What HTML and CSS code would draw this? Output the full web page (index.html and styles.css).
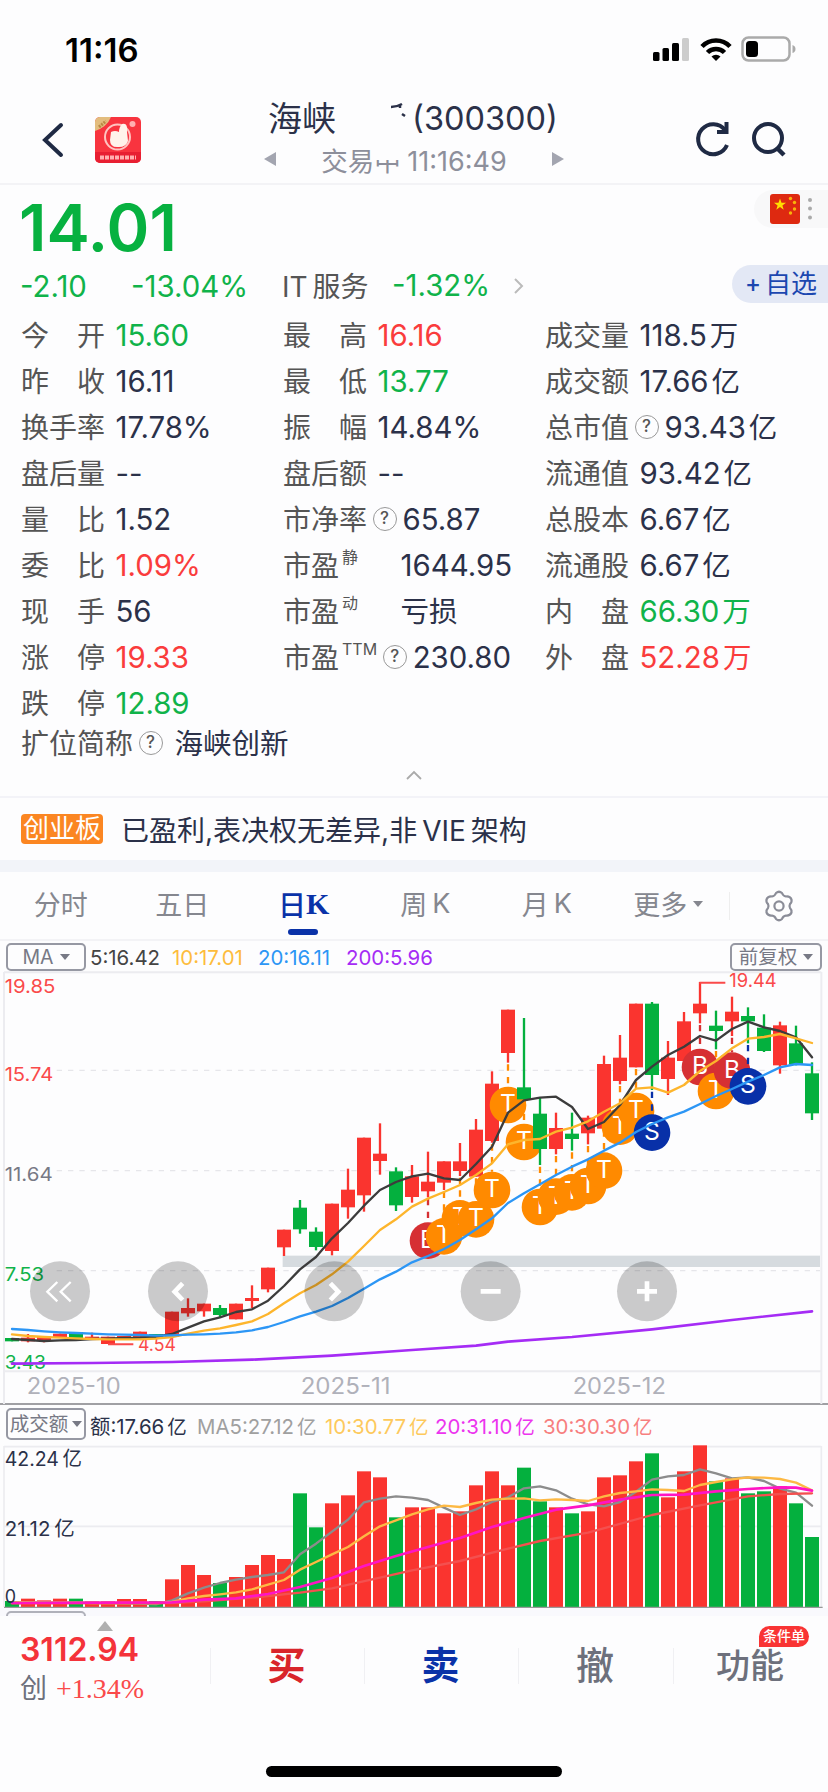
FILE: index.html
```html
<!DOCTYPE html>
<html lang="zh-CN">
<head>
    <meta charset="UTF-8">
    <meta name="viewport" content="width=device-width, initial-scale=1.0">
    <title>海峡创新 300300</title>
    <link rel="stylesheet" href="styles.css">
</head>
<body>
    <!-- 状态栏 -->
    <div class="status-bar">
        <span class="clock">11:16</span>
        <svg class="status-icons" width="142" height="30" viewBox="0 0 142 30">
            <rect x="0" y="18" width="6.5" height="9" rx="1.5"/>
            <rect x="9.5" y="14" width="6.5" height="13" rx="1.5"/>
            <rect x="19" y="9" width="7" height="18" rx="1.5"/>
            <rect x="29" y="4" width="7" height="23" rx="1.5" fill="#ccc"/>
            <g fill="none" stroke="#000" stroke-width="4.6">
                <path d="M49 12.5a19.5 19.5 0 0 1 28 0"/>
                <path d="M54.5 18.5a12 12 0 0 1 17 0"/>
            </g>
            <path d="M58.500 22.500a6.500 6.500 0 0 1 9 0l-4.500 4.500z"/>
            <rect x="89.500" y="3.500" width="47" height="23" rx="6" fill="none" stroke="#aaa" stroke-width="2.500"/>
            <rect x="93" y="7" width="12" height="16" rx="3.500"/>
            <path d="M139.500 11q3 1 3 4t-3 4z" fill="#aaa"/>
        </svg>
    </div>

    <!-- 标题栏 -->
    <header class="header">
        <div class="header-left">
            <svg width="22" height="34" viewBox="0 0 22 34"><path d="M19 2L3 17l16 15" fill="none" stroke="#1f2a44" stroke-width="4" stroke-linecap="round"/></svg>
            <svg class="app-logo" width="46" height="46" viewBox="0 0 46 46">
                <rect width="46" height="46" rx="5" fill="#f8343f"/>
                <path d="M0 14V5a5 5 0 0 1 5-5h11q-4 10-16 14z" fill="#e3bd7e"/>
                <path d="M4 10l7-6" stroke="#b98a45" stroke-width="3" stroke-dasharray="2 1"/>
                <circle cx="22.500" cy="20" r="12.500" fill="none" stroke="#ffc4c0" stroke-width="2"/>
                <path d="M16 15q4-2 8 0 0-5 3-8 6-2 5 8l1 9q-2 6-9 6-9 1-9-7z" fill="#fff3ea"/>
                <circle cx="37.500" cy="7" r="3" fill="#ffb0b0"/>
                <path d="M0 35h46v6a5 5 0 0 1-5 5H5a5 5 0 0 1-5-5z" fill="#e81f32"/>
                <path d="M5 40.500h36" stroke="#ffb0b0" stroke-width="4" stroke-dasharray="4 1"/>
            </svg>
        </div>
        <div class="header-title">
            <div class="stock-name">
                <span>海峡</span>
                <svg width="76" height="34" viewBox="0 0 76 34"><path d="M55 6q6 0 11-3M64 4v3M66 13l3 2" fill="none" stroke="#2b3149" stroke-width="2.500"/></svg>
                <span class="stock-code">(300300)</span>
            </div>
            <div class="trade-state">
                <i class="arrow-left"></i>
                <span class="state-text">交易<span class="worn">中</span> <span class="state-time">11:16:49</span></span>
                <i class="arrow-right"></i>
            </div>
        </div>
        <div class="header-right">
            <svg width="36" height="38" viewBox="0 0 36 38"><path d="M31 10A15 15 0 1 0 33 25" fill="none" stroke="#1f2a44" stroke-width="4"/><path d="M23 12h9.500V2" fill="none" stroke="#1f2a44" stroke-width="4"/></svg>
            <svg width="36" height="38" viewBox="0 0 36 38"><circle cx="17" cy="18" r="14" fill="none" stroke="#1f2a44" stroke-width="4"/><path d="M26 28l7 7" stroke="#1f2a44" stroke-width="4.500"/></svg>
        </div>
    </header>

    <!-- 行情 -->
    <section class="quote">
        <div class="quote-top">
            <span class="price">14.01</span>
            <div class="market-tag">
                <svg width="30" height="30" viewBox="0 0 30 30">
                    <rect width="30" height="30" rx="3" fill="#de2910"/>
                    <path d="M10 4.500l1.500 4.200h4.500l-3.600 2.700 1.300 4.300-3.700-2.600-3.700 2.600 1.300-4.300L4 8.700h4.500z" fill="#ffde00"/>
                    <g fill="#f8b40a"><circle cx="20.500" cy="4.500" r="1.700"/><circle cx="24.500" cy="8.500" r="1.700"/><circle cx="24.500" cy="15" r="1.700"/><circle cx="20.500" cy="19" r="1.700"/></g>
                </svg>
                <svg width="6" height="26" viewBox="0 0 6 26" fill="#aaa"><circle cx="3" cy="4" r="2"/><circle cx="3" cy="12.500" r="2"/><circle cx="3" cy="21.500" r="2"/></svg>
            </div>
        </div>
        <div class="change-row">
            <span class="num green change">-2.10</span>
            <span class="num green percent">-13.04%</span>
            <span class="industry">IT<span class="thin-gap"></span>服务</span>
            <span class="num green industry-percent">-1.32%</span>
            <svg width="12" height="18" viewBox="0 0 12 18"><path d="M2 2l7 7-7 7" fill="none" stroke="#bbb" stroke-width="2"/></svg>
            <span class="add-btn"><b>+</b>自选</span>
        </div>
        <div class="quote-grid">
            <div class="quote-col">
                <div class="item"><span class="name"><i>今</i><i>开</i></span><span class="num green">15.60</span></div>
                <div class="item"><span class="name"><i>昨</i><i>收</i></span><span class="num">16.11</span></div>
                <div class="item"><span class="name">换手率</span><span class="num">17.78%</span></div>
                <div class="item"><span class="name">盘后量</span><span class="num">--</span></div>
                <div class="item"><span class="name"><i>量</i><i>比</i></span><span class="num">1.52</span></div>
                <div class="item"><span class="name"><i>委</i><i>比</i></span><span class="num red">1.09%</span></div>
                <div class="item"><span class="name"><i>现</i><i>手</i></span><span class="num">56</span></div>
                <div class="item"><span class="name"><i>涨</i><i>停</i></span><span class="num red">19.33</span></div>
                <div class="item"><span class="name"><i>跌</i><i>停</i></span><span class="num green">12.89</span></div>
            </div>
            <div class="quote-col">
                <div class="item"><span class="name"><i>最</i><i>高</i></span><span class="num red">16.16</span></div>
                <div class="item"><span class="name"><i>最</i><i>低</i></span><span class="num green">13.77</span></div>
                <div class="item"><span class="name"><i>振</i><i>幅</i></span><span class="num">14.84%</span></div>
                <div class="item"><span class="name">盘后额</span><span class="num">--</span></div>
                <div class="item"><span class="name">市净率</span><span class="help">?</span><span class="num">65.87</span></div>
                <div class="item"><span class="name wide">市盈<sup>静</sup></span><span class="num">1644.95</span></div>
                <div class="item"><span class="name wide">市盈<sup>动</sup></span><span class="num cn">亏损</span></div>
                <div class="item"><span class="name auto">市盈<sup>TTM</sup></span><span class="help">?</span><span class="num">230.80</span></div>
            </div>
            <div class="quote-col">
                <div class="item"><span class="name">成交量</span><span class="num">118.5<em>万</em></span></div>
                <div class="item"><span class="name">成交额</span><span class="num">17.66<em>亿</em></span></div>
                <div class="item"><span class="name">总市值</span><span class="help">?</span><span class="num">93.43<em>亿</em></span></div>
                <div class="item"><span class="name">流通值</span><span class="num">93.42<em>亿</em></span></div>
                <div class="item"><span class="name">总股本</span><span class="num">6.67<em>亿</em></span></div>
                <div class="item"><span class="name">流通股</span><span class="num">6.67<em>亿</em></span></div>
                <div class="item"><span class="name"><i>内</i><i>盘</i></span><span class="num green">66.30<em>万</em></span></div>
                <div class="item"><span class="name"><i>外</i><i>盘</i></span><span class="num red">52.28<em>万</em></span></div>
            </div>
        </div>
        <div class="item full-name"><span class="name auto">扩位简称</span><span class="help">?</span><span class="num cn">海峡创新</span></div>
        <div class="fold"><svg width="16" height="10" viewBox="0 0 16 10"><path d="M1 9l7-7 7 7" fill="none" stroke="#aaa" stroke-width="1.800"/></svg></div>
    </section>

    <div class="board">
        <span class="board-tag">创业板</span>
        <span>已盈利,表决权无差异,非<span class="thin-gap"></span>VIE<span class="thin-gap"></span>架构</span>
    </div>

    <!-- 周期 -->
    <nav class="tabs">
        <span class="tab">分时</span>
        <span class="tab">五日</span>
        <span class="tab active">日<b>K</b></span>
        <span class="tab">周<span class="thin-gap"></span>K</span>
        <span class="tab">月<span class="thin-gap"></span>K</span>
        <span class="tab">更多<i class="caret"></i></span>
        <span class="setting">
            <svg width="32" height="32" viewBox="0 0 32 32" fill="none" stroke="#8b8d98" stroke-width="2.200" stroke-linejoin="round"><path d="M13 3q3-2.500 6 0 1 3 4 3.500 4-.5 5.500 3 .5 3-1.500 4.500-1 2 0 4 2 2 1.500 4.500-1.500 3.500-5.500 3-3 .5-4 3.500-3 2.500-6 0-1-3-4-3.500-4 .5-5.500-3Q3 20 5 18q1-2 0-4-2-1.500-1.500-4.500 1.500-3.500 5.500-3 3-.5 4-3.500z"/><circle cx="16" cy="16" r="4.600"/></svg>
        </span>
    </nav>

    <!-- K线 -->
    <div class="ma-row">
        <span class="select-box">MA<i class="caret"></i></span>
        <span class="ma ma5">5:16.42</span>
        <span class="ma ma10">10:17.01</span>
        <span class="ma ma20">20:16.11</span>
        <span class="ma ma200">200:5.96</span>
        <span class="select-box right-box">前复权<i class="caret"></i></span>
    </div>
    <div class="kline">
        <svg id="kline" width="828" height="432" viewBox="0 36 2484 1296"></svg>
    </div>

    <!-- 成交额 -->
    <div class="vol-row">
        <span class="select-box">成交额<i class="caret"></i></span>
        <span class="vol v0">额:17.66<em>亿</em></span>
        <span class="vol v5">MA5:27.12<em>亿</em></span>
        <span class="vol v10">10:30.77<em>亿</em></span>
        <span class="vol v20">20:31.10<em>亿</em></span>
        <span class="vol v30">30:30.30<em>亿</em></span>
    </div>
    <svg id="volume" class="volume" width="828" height="162" viewBox="0 167 2484 486"></svg>
    <div class="next-pane"><span class="next-box"></span></div>

    <!-- 底部操作栏 -->
    <footer class="footer">
        <div class="index">
            <i class="arrow-up"></i>
            <div class="index-value">3112.94</div>
            <div class="index-change">创<span>+1.34%</span></div>
        </div>
        <div class="action buy">买</div>
        <div class="action sell">卖</div>
        <div class="action cancel">撤</div>
        <div class="action more">功能<span class="badge">条件单</span></div>
    </footer>
    <div class="home-bar"></div>

    <script src="chart.js"></script>
</body>
</html>
```
FILE: styles.css
```css
* {
    box-sizing: border-box;
    margin: 0;
    padding: 0;
}

body {
    width: 828px;
    height: 1792px;
    overflow: hidden;
    background: #fdfdfe;
    font-family: Inter, "Noto Sans CJK SC", sans-serif;
    color: #2b3149;
}

i, em {
    font-style: normal;
}

svg {
    display: block;
    flex-shrink: 0;
    overflow: visible;
}

.green { color: #10b34a; }
.red { color: #fa3c3c; }

.thin-gap {
    display: inline-block;
    width: 5px;
}

.caret {
    display: inline-block;
    margin-left: 6px;
    border: 5px solid transparent;
    border-top: 6px solid currentColor;
    border-bottom: 0;
}

/* 状态栏 */
.status-bar {
    display: flex;
    justify-content: space-between;
    align-items: center;
    height: 98px;
    padding: 0 33px 0 65px;
    color: #000;
}

.clock {
    padding-top: 1px;
    font-size: 33px;
    font-weight: 600;
}

/* 标题栏 */
.header {
    display: grid;
    grid-template-columns: 240px 1fr 240px;
    height: 87px;
    border-bottom: 2px solid #f3f3f6;
}

.header-left {
    display: flex;
    align-items: center;
    gap: 31px;
    padding-left: 42px;
    padding-bottom: 1px;
}

.header-right {
    display: flex;
    align-items: center;
    justify-content: flex-end;
    gap: 21px;
    padding-right: 41px;
    padding-bottom: 3px;
}

.header-title {
    display: flex;
    flex-direction: column;
    align-items: center;
}

.stock-name {
    display: flex;
    align-items: center;
    height: 40px;
    margin-left: -2px;
    font-size: 34px;
}

.stock-name span:first-child {
    line-height: 36px;
    margin-top: 2px;
}

.stock-code {
    font-size: 32.5px;
}

.trade-state {
    display: flex;
    align-items: center;
    justify-content: space-between;
    width: 300px;
    height: 44px;
    padding-bottom: 2px;
    color: #8d8f9b;
    font-size: 26.5px;
}

.state-time {
    font-size: 27px;
    margin-left: -1px;
}

.worn {
    position: relative;
}

.worn::after {
    content: "";
    position: absolute;
    left: 0;
    top: 0;
    width: 100%;
    height: 47%;
    background: #fdfdfe;
}

.arrow-left, .arrow-right {
    border: 7px solid transparent;
}

.arrow-left {
    border-left: 0;
    border-right: 12px solid #a3a5b0;
}

.arrow-right {
    border-right: 0;
    border-left: 12px solid #a3a5b0;
}

/* 行情 */
.quote {
    height: 613px;
    border-bottom: 2px solid #f3f3f8;
}

.quote-top {
    display: flex;
    justify-content: space-between;
    height: 78px;
    padding-left: 19px;
}

.price {
    color: #07b140;
    font-size: 65px;
    font-weight: 600;
    line-height: 85px;
}

.market-tag {
    display: flex;
    align-items: center;
    gap: 7px;
    width: 74px;
    height: 38px;
    margin-top: 5px;
    padding-left: 16px;
    border-radius: 19px 0 0 19px;
    background: #f8f8f9;
}

.change-row {
    display: flex;
    align-items: center;
    height: 46px;
    padding-left: 20px;
}

.num {
    font-size: 29.4px;
    line-height: 42px;
    padding-top: 2px;
    white-space: nowrap;
}

.num em {
    margin-left: 3px;
    font-size: 28.500px;
    line-height: 30px;
}

.num.cn {
    font-size: 28.500px;
    padding-top: 1px;
}

.change { width: 111px; }
.percent { width: 151px; }

.industry {
    width: 110px;
    margin-bottom: 2px;
    color: #555;
    font-size: 28px;
}

.industry-percent {
    width: 121px;
    padding-top: 0;
}

.add-btn {
    display: flex;
    align-items: center;
    gap: 4px;
    width: 96px;
    height: 38px;
    margin-left: auto;
    margin-bottom: 5px;
    padding-left: 13px;
    border-radius: 19px 0 0 19px;
    background: #e3e8f5;
    color: #1c47b0;
    font-size: 26px;
    line-height: 36px;
    white-space: nowrap;
}

.add-btn b {
    font-size: 24px;
    font-weight: 500;
}

.quote-grid {
    display: grid;
    grid-template-columns: 262px 262px 1fr;
    padding: 3px 0 0 21px;
}

.item {
    display: flex;
    align-items: center;
    height: 46px;
}

.name {
    display: flex;
    justify-content: space-between;
    width: 84px;
    margin-right: 10.5px;
    color: #555;
    font-size: 28px;
    line-height: 42px;
    padding-top: 1px;
    white-space: nowrap;
}

.name sup {
    font-size: 16px;
    line-height: 20px;
    margin-top: 2px;
    margin-left: 3px;
    margin-right: auto;
}

.name.wide { width: 107px; }
.name.auto { width: auto; }

.help {
    width: 24px;
    height: 24px;
    margin-left: -5px;
    margin-right: 6px;
    border: 1.5px solid #999;
    border-radius: 50%;
    color: #555;
    font-size: 17px;
    font-weight: 500;
    line-height: 21px;
    text-align: center;
}

.full-name {
    height: 34px;
    padding-left: 21px;
}

.full-name .help {
    margin-right: 12px;
}

.fold {
    display: flex;
    justify-content: center;
    padding-top: 10px;
}

.board {
    display: flex;
    align-items: center;
    gap: 18px;
    height: 74px;
    padding: 0 21px;
    border-bottom: 12px solid #f2f4f9;
    font-size: 28px;
}

.board-tag {
    width: 82px;
    height: 30px;
    border-radius: 4px;
    background: #fb8622;
    color: #fff;
    font-size: 26px;
    line-height: 29px;
    text-align: center;
}

/* 周期 */
.tabs {
    display: flex;
    height: 69px;
    border-bottom: 2px solid #f3f3f6;
}

.tab {
    display: flex;
    align-items: center;
    justify-content: center;
    width: 121.5px;
    padding-bottom: 4px;
    color: #85878f;
    font-size: 27px;
}

.tab.active {
    position: relative;
    color: #0a32a8;
    font-size: 28px;
    font-weight: 500;
}

.tab.active b {
    font-family: "Liberation Serif", serif;
    font-size: 30px;
}

.tab.active::after {
    content: "";
    position: absolute;
    bottom: 4px;
    left: 45px;
    width: 30px;
    height: 6px;
    border-radius: 3px;
    background: #0a32a8;
}

.setting {
    display: flex;
    flex: 1;
    align-items: center;
    justify-content: center;
}

.setting::before {
    content: "";
    width: 1px;
    height: 28px;
    margin-right: 33px;
    margin-left: -33px;
    background: #eee;
}

/* 指标行 */
.ma-row, .vol-row {
    display: flex;
    align-items: center;
    padding: 0 6px;
    white-space: nowrap;
}

.ma-row {
    height: 31px;
}

.select-box {
    display: flex;
    align-items: center;
    justify-content: center;
    width: 80px;
    height: 28px;
    margin-right: 4px;
    border: 2px solid #9698a3;
    border-radius: 5px;
    color: #777985;
    font-size: 19.500px;
    line-height: 22px;
}

.right-box {
    width: 92px;
    margin: 0 0 0 auto;
}

.ma {
    padding-top: 1px;
    font-size: 20.4px;
}

.ma5 { width: 82px; color: #444; }
.ma10 { width: 86px; color: #fdbc3c; }
.ma20 { width: 88px; color: #2c96f5; }
.ma200 { color: #a52cf5; }

.kline {
    border-bottom: 2px solid #a0a0a4;
    height: 433px;
}

.vol-row {
    height: 41px;
    padding-bottom: 3px;
}

.vol-row .select-box {
    height: 32px;
}

.vol-row .caret {
    margin-left: 4px;
}

.vol {
    padding-top: 2px;
    font-size: 20.4px;
}

.vol em {
    margin-left: 3px;
    font-size: 19.5px;
}

.v0 { width: 107px; }
.v5 { width: 128px; color: #a0a0a0; }
.v10 { width: 110px; color: #fdc95c; }
.v20 { width: 108px; color: #ec35ee; }
.v30 { color: #f77f7f; }

.next-pane {
    height: 8px;
    padding: 3px 6px 0;
    background: #f9f9fd;
    overflow: hidden;
}

.next-box {
    display: block;
    width: 80px;
    height: 28px;
    border: 2px solid #b0b1ba;
    border-radius: 5px;
}

svg text {
    font-family: Inter, "Noto Sans CJK SC", sans-serif;
}

/* 底部操作栏 */
.footer {
    display: grid;
    grid-template-columns: 210px 154px 154px 155px 1fr;
    height: 150px;
}

.index {
    position: relative;
    padding: 14px 0 0 20px;
}

.arrow-up {
    position: absolute;
    left: 97px;
    top: 5px;
    border: 8px solid transparent;
    border-top: 0;
    border-bottom: 10px solid #b0b0b0;
}

.index-value {
    color: #f4333a;
    font-size: 32px;
    font-weight: 600;
    line-height: 39px;
}

.index-change {
    color: #6d707c;
    font-size: 27px;
    line-height: 40px;
}

.index-change span {
    margin-left: 9px;
    color: #fa4a4a;
    font-family: "Liberation Serif", serif;
    font-size: 28px;
}

.action {
    position: relative;
    display: flex;
    justify-content: center;
    height: 36px;
    margin-top: 32px;
    padding-right: 2px;
    border-left: 1px solid #f0f0f3;
    font-size: 38px;
    font-weight: 700;
    line-height: 34px;
}

.buy { color: #d9252b; }
.sell { color: #0a32a8; }
.cancel { color: #6d707c; font-weight: 500; }
.more { color: #6d707c; font-size: 34px; font-weight: 500; line-height: 36px; }

.badge {
    position: absolute;
    left: 85px;
    top: -22px;
    width: 50px;
    height: 21px;
    border-radius: 11px 11px 11px 0;
    background: #f93434;
    color: #fff;
    font-size: 14px;
    line-height: 20px;
    text-align: center;
}

.home-bar {
    width: 296px;
    height: 11px;
    margin: 0 auto;
    border-radius: 6px;
    background: #000;
}
```
FILE: chart.js
```js
const RED = '#fa342f';
const GREEN = '#04b03e';
const STEP = 48;
const px = i => 36 + i * STEP;

// [涨跌, 实体上, 实体下, 最高, 最低]
const candles = [
    ['g',1134,1144,1134,1144],['r',1133,1144,1122,1147],['r',1130,1142,1130,1147],['r',1121,1133,1121,1133],
    ['g',1116,1135,1116,1135],['r',1130,1138,1118,1138],['r',1130,1152,1130,1152],['r',1128,1136,1128,1136],
    ['r',1115,1133,1115,1133],['g',1122,1134,1122,1134],['r',1055,1130,1055,1130],['r',1044,1060,1015,1070],
    ['r',1031,1054,1031,1070],['g',1044,1065,1035,1072],['r',1031,1078,1031,1078],['r',1014,1023,976,1044],
    ['r',923,988,923,997],['r',809,862,809,888],['g',743,808,720,821],['g',815,861,802,871],
    ['r',731,873,731,886],['r',689,742,626,776],['r',533,706,533,755],['r',581,603,490,644],
    ['g',634,736,622,753],['r',649,711,615,728],['r',665,694,575,712],['r',604,668,604,690],
    ['r',604,633,549,648],['r',509,650,477,650],['r',371,543,334,548],['r',149,279,149,308],
    ['g',382,418,174,418],['g',461,567,412,615],['r',504,567,458,583],['g',521,537,458,572],
    ['r',473,520,467,553],['r',312,506,287,506],['r',293,363,225,373],['r',131,322,131,322],
    ['g',131,345,126,390],['r',293,357,243,405],['r',184,303,156,303],['r',131,160,66,190],
    ['g',197,213,152,268],['r',155,184,110,228],['g',168,184,142,250],['g',203,273,163,276],
    ['r',196,316,185,341],['g',250,313,197,316],['g',340,460,307,480]
];

// 买卖点
const marks = {
    26: ['B',842], 27: ['T',829], 28: ['T',775], 29: ['T',778], 30: ['T',690], 31: ['T',435],
    32: ['T',546], 33: ['T',741], 34: ['T',710], 35: ['T',697], 36: ['T',678], 37: ['T',632],
    38: ['T',500], 39: ['T',453], 40: ['S',518], 43: ['B',321], 44: ['T',393], 45: ['B',332], 46: ['S',379]
};
const markColor = { B: '#d63033', T: '#ff8a00', S: '#0830a8' };

const ma5 = [1137,1140,1143,1141,1140,1137,1136,1134,1133,1130,1122,1103,1084,1072,1056,1048,1022,978,928,891,835,789,737,690,666,649,641,655,660,612,560,458,421,413,410,441,507,486,435,360,320,285,260,228,242,207,185,202,213,232,292];
const ma10 = [1123,1128,1131,1133,1135,1137,1138,1138,1138,1136,1131,1121,1112,1105,1095,1084,1062,1030,1000,975,943,905,858,810,778,740,716,696,675,645,610,553,540,537,515,503,484,455,430,386,382,398,375,333,303,265,236,231,222,235,249];
const ma20 = [1107,1110,1114,1117,1119,1121,1123,1124,1125,1127,1126,1124,1123,1121,1117,1111,1101,1086,1069,1055,1038,1014,986,958,935,907,888,867,840,808,775,729,700,673,645,620,598,572,548,516,492,472,455,432,408,387,365,345,322,312,315];
const ma200 = [[0,1211],[5,1209],[10,1206],[15,1199],[20,1187],[25,1170],[29,1157],[31,1145],[35,1131],[40,1108],[45,1080],[50,1054]];

const amount = [632,625,630,625,625,633,633,626,626,632,567,524,554,578,560,524,494,506,309,411,339,315,243,261,381,351,351,369,363,285,243,285,232,333,351,369,363,261,255,213,189,321,243,165,273,264,309,303,288,339,440];
const vol5 = [636,636,636,637,637,638,638,639,640,642,630,609,592,578,568,560,554,546,492,460,424,388,336,325,318,322,329,352,374,357,335,321,294,288,300,325,342,348,335,304,268,258,254,237,249,264,261,272,295,307,346];
const vol10 = [636,636,637,637,637,638,638,638,638,638,635,624,617,612,606,597,583,569,538,515,492,470,438,408,390,372,357,346,350,338,328,325,324,330,327,329,332,318,308,303,297,299,302,284,275,267,261,262,266,277,300];
const vol20 = [[0,638],[10,636],[12,628],[14,624],[16,611],[18,590],[20,563],[22,527],[24,497],[26,470],[28,443],[30,410],[32,383],[34,358],[36,345],[38,328],[40,314],[42,313],[44,303],[46,296],[48,291],[49,292],[50,301]];
const vol30 = [[0,639],[10,638],[12,633],[15,622],[18,607],[20,594],[23,562],[25,540],[28,512],[31,475],[33,452],[36,427],[40,374],[43,345],[46,318],[48,311],[50,309]];

const line = (data, color, w = 6) => {
    const pts = data.map((d, i) => Array.isArray(d) ? `${px(d[0])},${d[1]}` : `${px(i)},${d}`).join(' ');
    return `<polyline points="${pts}" fill="none" stroke="${color}" stroke-width="${w}" stroke-linejoin="round" stroke-linecap="round"/>`;
};

const label = (x, y, text, color, size, len) =>
    `<text x="${x}" y="${y}" fill="${color}" font-size="${size}" textLength="${len}" lengthAdjust="spacingAndGlyphs">${text}</text>`;

const drawKline = () => {
    let html = '<path d="M12 36V1332M2464 36V1332M12 37H2464M12 1234H2464" stroke="#ececf0" stroke-width="6" fill="none"/>';
    [331, 632, 932].forEach(y => {
        html += `<path d="M170 ${y}H2460" stroke="#e6e6ea" stroke-width="4" stroke-dasharray="16 18"/>`;
    });
    html += '<rect x="848" y="887" width="1612" height="34" fill="#d6dbdf"/>';
    candles.forEach(([type, top, bottom, high, low], i) => {
        const color = type === 'r' ? RED : GREEN;
        const x = px(i);
        html += `<path d="M${x} ${high}V${low}" stroke="${color}" stroke-width="7"/>`;
        html += `<rect x="${x - 21}" y="${top}" width="42" height="${bottom - top}" fill="${color}"/>`;
        if (marks[i]) {
            const [text, y] = marks[i];
            const c = markColor[text];
            html += `<path d="M${x} ${low + 5}V${y - 55}" stroke="${c}" stroke-width="7" stroke-dasharray="19 19"/>`;
            html += `<circle cx="${x}" cy="${y}" r="55" fill="${c}"/>`;
            html += `<text x="${x}" y="${y + 21}" fill="#fff" font-size="74" text-anchor="middle">${text}</text>`;
        }
    });
    html += '<path d="M2098 68H2176M324 1153H400" stroke="#fa4a4a" stroke-width="6"/>';
    html += label(2188, 81, '19.44', '#fa4a4a', 57, 142);
    html += label(414, 1172, '4.54', '#fa4a4a', 54, 114);
    html += label(14, 98, '19.85', '#fa4a4a', 58, 152);
    html += label(14, 362, '15.74', '#fa4a4a', 58, 146);
    html += label(14, 662, '11.64', '#777985', 58, 144);
    html += label(14, 962, '7.53', '#10b34a', 58, 118);
    html += label(14, 1226, '3.43', '#10b34a', 58, 124);
    html += line(ma200, '#a52cf5', 8) + line(ma5, '#3c3c3c', 7) + line(ma10, '#fdb52c', 7) + line(ma20, '#2c96f5', 7);
    [180, 534, 1003, 1472, 1941].forEach(x => {
        html += `<circle cx="${x}" cy="994" r="90" fill="#000" fill-opacity="0.2"/>`;
    });
    html += `<g fill="none" stroke="#fff">
        <path d="M172 966l-30 29 30 29M212 966l-30 29 30 29" stroke-width="7"/>
        <path d="M548 970l-24 25 24 25M991 970l24 25-24 25M1442 994h60M1911 994h60M1941 964v60" stroke-width="14"/>
    </g>`;
    html += label(80, 1301, '2025-10', '#b0b1ba', 69, 282);
    html += label(902, 1301, '2025-11', '#b0b1ba', 69, 270);
    html += label(1718, 1301, '2025-12', '#b0b1ba', 69, 280);
    document.getElementById('kline').innerHTML = html;
};

const drawVolume = () => {
    let html = '<path d="M12 167V650M2464 167V650M12 169H2464M12 408H2464" stroke="#ececf0" stroke-width="5" fill="none"/>';
    amount.forEach((y, i) => {
        html += `<rect x="${px(i) - 21}" y="${y}" width="42" height="${650 - y}" fill="${candles[i][0] === 'r' ? RED : GREEN}"/>`;
    });
    html += '<path d="M12 651H2468" stroke="#999" stroke-width="4"/>';
    html += line(vol5, '#8c8c8c', 7) + line(vol10, '#fdb944', 7) + line(vol30, '#f4504f', 7) + line(vol20, '#ff14c4', 8);
    html += label(14, 228, '42.24\u2009亿', '#2b3149', 60, 232);
    html += label(14, 438, '21.12\u2009亿', '#2b3149', 60, 210);
    html += label(14, 639, '0', '#2b3149', 57, 34);
    document.getElementById('volume').innerHTML = html;
};

drawKline();
drawVolume();
```
